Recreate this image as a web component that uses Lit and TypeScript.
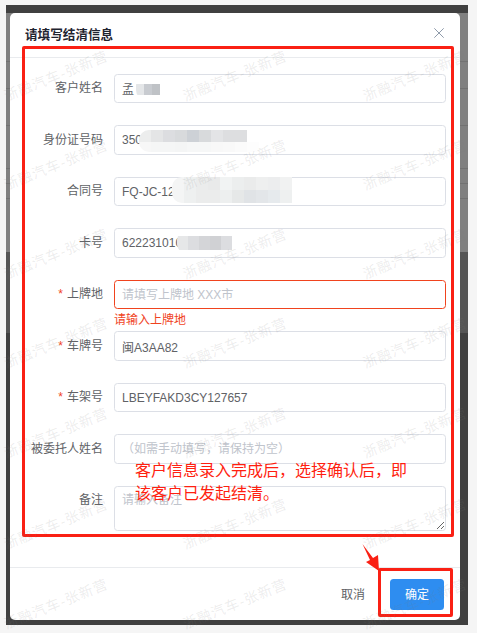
import { LitElement, html, css, svg } from "lit";
import { customElement } from "lit/decorators.js";

interface Field {
  label: string;
  required?: boolean;
  value?: string;
  placeholder?: string;
  error?: string;
  mosaic?: { cls: string; rows: string[][] };
}

const g = (s: string) => s.split(" ").map((c) => "#" + c);

const FIELDS: Field[] = [
  {
    label: "客户姓名",
    value: "孟",
    mosaic: { cls: "m-name", rows: [g("fff fff fff"), g("e4e6e8 c8cbd0 bfc2c6"), g("fff fff fff")] },
  },
  {
    label: "身份证号码",
    value: "350",
    mosaic: {
      cls: "m-id",
      rows: [
        g("eceded e4e5e6 dcdde0 d8dadc cdd1d6 d8dadc e3e4e6 dddee0 dddee0"),
        g("f7f7f7 f5f6f6 f5f6f6 f4f5f5 f6f7f7 f6f7f7 f8f8f8 f9f9f9 fbfbfb fdfdfd"),
      ],
    },
  },
  {
    label: "合同号",
    value: "FQ-JC-12",
    mosaic: {
      cls: "m-contract",
      rows: [
        g("f4f5f5 eef0f0 ebecec e9eaea f1f3f3 eceeee eaebeb eeefef ecedee f1f2f2"),
        g("f4f5f5 eef0f0 ebecec ebecec edefef e6e8e8 e0e3e6 e3e6e9 e6eaed eef0f0"),
      ],
    },
  },
  {
    label: "卡号",
    value: "622231010",
    mosaic: {
      cls: "m-card",
      rows: [
        g("fff fff fff fff fff fff"),
        g("e6e7e8 dcdde0 d4d5d8 d0d1d4 dcdde0 fff"),
        g("fff fff fff fff fff fff"),
      ],
    },
  },
  { label: "上牌地", required: true, placeholder: "请填写上牌地 XXX市", error: "请输入上牌地" },
  { label: "车牌号", required: true, value: "闽A3AA82" },
  { label: "车架号", required: true, value: "LBEYFAKD3CY127657" },
  { label: "被委托人姓名", placeholder: "（如需手动填写，请保持为空）" },
];

const WM_ROWS = [76, 165, 254, 343, 433, 524, 604];
const WM_COLS = [56, 235, 415];

@customElement("app-root")
export class AppRoot extends LitElement {
  static styles = css`
    :host {
      display: block;
      position: relative;
      width: 477px;
      height: 633px;
      overflow: hidden;
      background: #f5f5f5;
      font-family: "Liberation Sans", "Noto Sans CJK SC", sans-serif;
      font-size: 12px;
      color: #606266;
    }
    .page {
      padding: 5px 9px 8px 6px;
      height: 633px;
      box-sizing: border-box;
    }
    .backdrop {
      height: 620px;
      box-sizing: border-box;
      padding: 8px 8px 5px 4px;
      background-repeat: no-repeat;
      background-size:
        100% 1px, 100% 1px, 100% 1px, 100% 1px, 100% 1px, 100% 1px, 100% 100%;
      background-position:
        0 56px, 0 83px, 0 120px, 0 163px, 0 178px, 0 193px, 0 0;
      background-image:
        linear-gradient(#727272, #727272),
        linear-gradient(#727272, #727272),
        linear-gradient(#727272, #727272),
        linear-gradient(#727272, #727272),
        linear-gradient(#727272, #727272),
        linear-gradient(#727272, #727272),
        linear-gradient(
          #404040 0,
          #404040 8px,
          #808080 8px,
          #808080 247px,
          #555555 247px,
          #555555 328px,
          #404040 328px
        );
    }
    .dialog {
      height: 607px;
      background: #fff;
      border-radius: 5px;
      display: flex;
      flex-direction: column;
    }
    .header {
      height: 45px;
      flex: none;
      box-sizing: border-box;
      padding: 0 16px 0 15px;
      display: flex;
      align-items: center;
      justify-content: space-between;
      border-bottom: 1px solid #e9ebee;
    }
    .title {
      font-size: 12.6px;
      font-weight: 700;
      color: #1f2430;
      margin-top: -3px;
    }
    .close {
      width: 10px;
      height: 10px;
      display: block;
      margin-top: -4px;
    }
    .form {
      flex: 1;
      padding: 16px 14px 0 0;
      display: flex;
      flex-direction: column;
      gap: 22.1px;
    }
    .row {
      display: flex;
      align-items: center;
      gap: 11px;
      height: 29.4px;
      flex: none;
    }
    .row.area {
      height: 45px;
      align-items: flex-start;
    }
    .label {
      flex: 0 0 93px;
      text-align: right;
      white-space: nowrap;
      line-height: 29px;
    }
    .star {
      color: #f0431e;
      margin-right: 4px;
    }
    .control {
      flex: 1;
      position: relative;
      height: 100%;
    }
    input,
    textarea {
      display: block;
      width: 100%;
      height: 100%;
      box-sizing: border-box;
      border: 1px solid #dcdfe6;
      border-radius: 3.5px;
      padding: 0 7px;
      font: inherit;
      color: #606266;
      background: transparent;
      outline: none;
      margin: 0;
    }
    textarea {
      padding: 4px 7px;
      line-height: 18px;
      resize: vertical;
    }
    input::placeholder,
    textarea::placeholder {
      color: #c0c4cc;
    }
    .invalid input {
      border-color: #f0431e;
    }
    .error {
      position: absolute;
      left: 0;
      top: 100%;
      margin-top: 3px;
      color: #f0431e;
      font-size: 12px;
      line-height: 17px;
      white-space: nowrap;
    }
    .mosaic {
      position: absolute;
      display: flex;
      flex-direction: column;
      overflow: hidden;
      border-radius: 10px 0 0 10px;
    }
    .mosaic div {
      display: flex;
    }
    .mosaic span {
      display: block;
      flex: none;
      width: 12px;
      height: 12px;
    }
    .m-name {
      left: 22px;
      top: 1px;
    }
    .m-name span {
      width: 8px;
      height: 9px;
    }
    .m-name div:nth-child(2) span {
      height: 11px;
    }
    .m-name div:nth-child(3) span {
      height: 5px;
    }
    .m-id {
      left: 25px;
      top: 5px;
    }
    .m-id div + div span {
      height: 10px;
    }
    .m-contract {
      left: 58px;
      top: 0;
    }
    .m-contract span {
      height: 13px;
    }
    .m-card {
      left: 63px;
      top: 1px;
      border-radius: 12px;
    }
    .m-card span {
      width: 11px;
      height: 7px;
    }
    .m-card div:nth-child(2) span {
      height: 14px;
    }
    .m-card div:nth-child(3) span {
      height: 5px;
    }
    .footer {
      flex: none;
      height: 53px;
      box-sizing: border-box;
      border-top: 1px solid #e9ebee;
      padding: 11px 16px 0 0;
      display: flex;
      justify-content: flex-end;
      align-items: flex-start;
      gap: 25px;
    }
    .cancel {
      line-height: 32px;
    }
    .ok {
      width: 54px;
      height: 31px;
      line-height: 32px;
      text-align: center;
      border-radius: 3.5px;
      background: #2e8df0;
      color: #fff;
    }
    .note {
      position: absolute;
      left: 135px;
      top: 459px;
      width: 280px;
      color: #ff1f10;
      font-size: 16px;
      line-height: 23px;
    }
    .box {
      position: absolute;
      box-sizing: border-box;
      border: 3px solid #fa2014;
      border-radius: 2px;
      pointer-events: none;
    }
    .box-form {
      left: 22px;
      top: 46px;
      width: 432px;
      height: 491px;
    }
    .box-ok {
      left: 378px;
      top: 568px;
      width: 75px;
      height: 49px;
    }
    .overlay {
      position: absolute;
      left: 0;
      top: 0;
      pointer-events: none;
    }
    .wm {
      position: absolute;
      width: 120px;
      margin-left: -60px;
      margin-top: -10px;
      line-height: 20px;
      text-align: center;
      font-size: 14px;
      letter-spacing: 1px;
      white-space: nowrap;
      color: rgba(120, 120, 120, 0.14);
      transform: rotate(-22deg);
    }
  `;

  private renderMosaic(f: Field) {
    if (!f.mosaic) return null;
    return html`<div class="mosaic ${f.mosaic.cls}">
      ${f.mosaic.rows.map(
        (r) =>
          html`<div>
            ${r.map((c) => html`<span style="background:${c}"></span>`)}
          </div>`
      )}
    </div>`;
  }

  private renderField(f: Field) {
    return html`<div class="row ${f.error ? "invalid" : ""}">
      <div class="label">
        ${f.required ? html`<span class="star">*</span>` : null}${f.label}
      </div>
      <div class="control">
        <input readonly .value=${f.value ?? ""} placeholder=${f.placeholder ?? ""} />
        ${this.renderMosaic(f)}
        ${f.error ? html`<div class="error">${f.error}</div>` : null}
      </div>
    </div>`;
  }

  render() {
    return html`
      <div class="page">
        <div class="backdrop">
          <div class="dialog">
            <div class="header">
              <div class="title">请填写结清信息</div>
              <svg class="close" viewBox="0 0 10 10" fill="none" stroke="#8f9bab" stroke-width="1">
                <path d="M.3.3l9.4 9.4M9.7.3L.3 9.7" />
              </svg>
            </div>
            <div class="form">
              ${FIELDS.map((f) => this.renderField(f))}
              <div class="row area">
                <div class="label">备注</div>
                <div class="control">
                  <textarea readonly placeholder="请输入备注"></textarea>
                </div>
              </div>
            </div>
            <div class="footer">
              <div class="cancel">取消</div>
              <div class="ok">确定</div>
            </div>
          </div>
        </div>
      </div>
      <div class="note">客户信息录入完成后，选择确认后，即该客户已发起结清。</div>
      <div class="box box-form"></div>
      <div class="box box-ok"></div>
      <svg class="overlay" width="477" height="633" viewBox="0 0 477 633">
        ${svg`<path d="M362.5 544L373 558 378 555 379 571 366 562 370 560Z" fill="#fa2014" />`}
      </svg>
      ${WM_ROWS.map((y) =>
        WM_COLS.map(
          (x) => html`<div class="wm" style="left:${x}px;top:${y}px">浙融汽车-张新营</div>`
        )
      )}
    `;
  }
}
